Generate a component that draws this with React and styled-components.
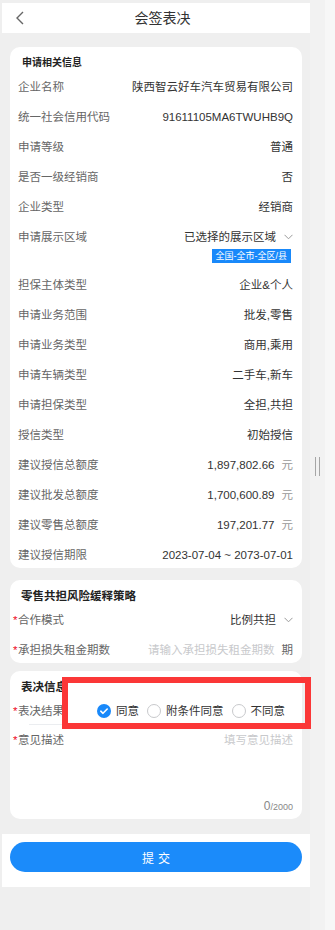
import React from "react";
import styled, { createGlobalStyle } from "styled-components";

const GlobalStyle = createGlobalStyle`
  html, body {
    margin: 0;
    padding: 0;
    background: #efefef;
    font-family: "Liberation Sans", "Noto Sans CJK SC", sans-serif;
  }
  * {
    box-sizing: border-box;
  }
`;

const Screen = styled.div`
  display: flex;
  width: 335px;
  min-height: 930px;
`;

const Main = styled.div`
  width: 308px;
  margin-left: 2px;
  padding-top: 3px;
  background: #efefef;
`;

const ScrollTrack = styled.div`
  width: 15px;
  background: #f2f2f2;
  padding: 457px 0 0 5px;
`;

const Grip = styled.div`
  width: 5px;
  height: 19px;
  border-left: 1px solid #a6a6a6;
  border-right: 1px solid #a6a6a6;
`;

const RightEdge = styled.div`
  width: 10px;
  background: #f7f7f7;
`;

const Header = styled.div`
  display: grid;
  grid-template-columns: 40px 1fr 40px;
  align-items: center;
  height: 30px;
  background: #fff;
  padding-left: 13px;

  h1 {
    margin: 0;
    text-align: center;
    font-size: 14px;
    font-weight: 400;
    color: #333;
    line-height: 16px;
  }
`;

const Content = styled.div`
  padding: 14px 8px 0;
`;

const Card = styled.section`
  position: relative;
  background: #fff;
  border-radius: 10px;
  margin-bottom: ${(p) => p.gap || 0}px;
`;

const CardTitle = styled.h2`
  margin: 0;
  padding: ${(p) => (p.small ? "10px 0 1px 12px" : "10px 0 1px 11px")};
  font-size: ${(p) => (p.small ? 10 : 11.5)}px;
  line-height: 12px;
  font-weight: 700;
  color: #222;
`;

const Row = styled.div`
  display: flex;
  justify-content: space-between;
  align-items: flex-start;
  padding: 9px 9px 5px 8px;
  font-size: 11.5px;
  line-height: 16px;
  border-bottom: ${(p) => (p.divided ? "1px solid #ebedf0" : "none")};
`;

const Label = styled.span`
  color: #666;
  white-space: nowrap;

  em {
    font-style: normal;
    color: #ee0a24;
    margin-left: -5px;
    display: inline-block;
    width: 5px;
  }
`;

const Value = styled.span`
  display: flex;
  flex-direction: column;
  align-items: flex-end;
  color: ${(p) => (p.placeholder ? "#c8c9cc" : "#333")};
  white-space: nowrap;
`;

const ValueLine = styled.span`
  display: flex;
  align-items: center;
  gap: ${(p) => p.gap || 7}px;
`;

const Unit = styled.span`
  color: ${(p) => p.color || "#999"};
`;

const Tag = styled.span`
  margin: 4px 2px 0 0;
  padding: 0 4px;
  background: #1989fa;
  color: #fff;
  font-size: 9px;
  line-height: 14px;
`;

const Divider = styled.div`
  margin-left: 19px;
  border-bottom: 1px solid #ebedf0;
`;

const RadioGroup = styled.div`
  display: flex;
  align-items: center;
  gap: 8px;
  padding-right: 8px;
`;

const Radio = styled.label`
  display: flex;
  align-items: center;
  gap: 5px;
  color: #333;
`;

const EmptyDot = styled.span`
  width: 14px;
  height: 14px;
  border-radius: 50%;
  border: 1px solid #c8c9cc;
`;

const Opinion = styled.div`
  padding: 7px 9px 5px 8px;
  font-size: 11.5px;
  line-height: 16px;

  .head {
    display: flex;
    justify-content: space-between;
  }
  .hint {
    color: #c8c9cc;
  }
  .count {
    margin-top: 51px;
    text-align: right;
    line-height: 14px;
    color: #888;
    font-size: 12px;
  }
  .count small {
    font-size: 9px;
  }
`;

const Annotation = styled.div`
  position: absolute;
  left: 52px;
  top: 6px;
  width: 249px;
  height: 52px;
  border: 6px solid #fb3737;
  pointer-events: none;
`;

const SubmitBar = styled.div`
  margin-top: 15px;
  background: #fff;
  padding: 8px 8px 15px;
`;

const SubmitButton = styled.button`
  display: block;
  width: 100%;
  height: 30px;
  border: none;
  border-radius: 15px;
  background: #1b8bfa;
  color: #fff;
  font-family: "Noto Sans CJK SC", sans-serif;
  font-size: 12px;
  letter-spacing: 4px;
  text-indent: 4px;
`;

const Chevron = () => (
  <svg width="9" height="6" viewBox="0 0 9 6">
    <path d="M0.5 0.8 L4.5 4.8 L8.5 0.8" fill="none" stroke="#9a9a9a" strokeWidth="1" />
  </svg>
);

const BackIcon = () => (
  <svg width="9" height="14" viewBox="0 0 9 14">
    <path d="M8 1 L2 7 L8 13" fill="none" stroke="#666" strokeWidth="1.4" />
  </svg>
);

const CheckedDot = () => (
  <svg width="14" height="14" viewBox="0 0 14 14">
    <circle cx="7" cy="7" r="7" fill="#1989fa" />
    <path d="M3.8 7.2 L6 9.3 L10.2 5" fill="none" stroke="#fff" strokeWidth="1.6" strokeLinecap="round" strokeLinejoin="round" />
  </svg>
);

const infoRows = [
  { label: "企业名称", value: "陕西智云好车汽车贸易有限公司" },
  { label: "统一社会信用代码", value: "91611105MA6TWUHB9Q" },
  { label: "申请等级", value: "普通" },
  { label: "是否一级经销商", value: "否" },
  { label: "企业类型", value: "经销商" },
  { label: "申请展示区域", value: "已选择的展示区域", select: true, tag: "全国-全市-全区/县" },
  { label: "担保主体类型", value: "企业&个人" },
  { label: "申请业务范围", value: "批发,零售" },
  { label: "申请业务类型", value: "商用,乘用" },
  { label: "申请车辆类型", value: "二手车,新车" },
  { label: "申请担保类型", value: "全担,共担" },
  { label: "授信类型", value: "初始授信" },
  { label: "建议授信总额度", value: "1,897,802.66", unit: "元" },
  { label: "建议批发总额度", value: "1,700,600.89", unit: "元" },
  { label: "建议零售总额度", value: "197,201.77", unit: "元" },
  { label: "建议授信期限", value: "2023-07-04 ~ 2073-07-01" },
];

const App = () => {
  return (
    <Screen>
      <GlobalStyle />
      <Main>
        <Header>
          <BackIcon />
          <h1>会签表决</h1>
          <span />
        </Header>

        <Content>
          <Card gap={12}>
            <CardTitle small>申请相关信息</CardTitle>
            {infoRows.map((row) => (
              <Row key={row.label}>
                <Label>{row.label}</Label>
                <Value>
                  {row.select ? (
                    <ValueLine gap={8}>
                      {row.value}
                      <Chevron />
                    </ValueLine>
                  ) : row.unit ? (
                    <ValueLine>
                      {row.value}
                      <Unit>{row.unit}</Unit>
                    </ValueLine>
                  ) : (
                    row.value
                  )}
                  {row.tag && <Tag>{row.tag}</Tag>}
                </Value>
              </Row>
            ))}
          </Card>

          <Card gap={8}>
            <CardTitle>零售共担风险缓释策略</CardTitle>
            <Row>
              <Label>
                <em>*</em>合作模式
              </Label>
              <Value>
                <ValueLine gap={8}>
                  比例共担
                  <Chevron />
                </ValueLine>
              </Value>
            </Row>
            <Row>
              <Label>
                <em>*</em>承担损失租金期数
              </Label>
              <Value placeholder>
                <ValueLine>
                  请输入承担损失租金期数
                  <Unit color="#666">期</Unit>
                </ValueLine>
              </Value>
            </Row>
          </Card>

          <Card>
            <CardTitle>表决信息</CardTitle>
            <Row>
              <Label>
                <em>*</em>表决结果
              </Label>
              <RadioGroup>
                <Radio>
                  <CheckedDot />
                  同意
                </Radio>
                <Radio>
                  <EmptyDot />
                  附条件同意
                </Radio>
                <Radio>
                  <EmptyDot />
                  不同意
                </Radio>
              </RadioGroup>
            </Row>
            <Divider />
            <Opinion>
              <div className="head">
                <Label>
                  <em>*</em>意见描述
                </Label>
                <span className="hint">填写意见描述</span>
              </div>
              <div className="count">
                0<small>/2000</small>
              </div>
            </Opinion>
            <Annotation />
          </Card>
        </Content>

        <SubmitBar>
          <SubmitButton>提交</SubmitButton>
        </SubmitBar>
      </Main>
      <ScrollTrack>
        <Grip />
      </ScrollTrack>
      <RightEdge />
    </Screen>
  );
};

export default App;
